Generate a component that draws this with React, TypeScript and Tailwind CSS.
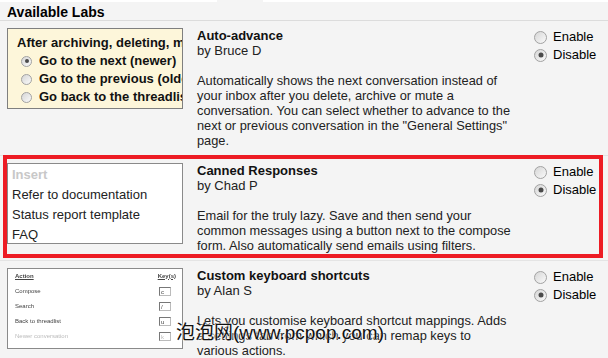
const font = "font-['Liberation_Sans',Arial,sans-serif]";

function Radio({ checked, small }: { checked?: boolean; small?: boolean }) {
  return (
    <span
      className={`relative inline-block shrink-0 rounded-full border border-[#a2a2a2] bg-gradient-to-br from-[#d6d6d6] to-[#fafafa] ${
        small ? "h-[11px] w-[11px]" : "h-[13px] w-[13px]"
      }`}
    >
      {checked && (
        <span
          className={`absolute left-1/2 top-1/2 -translate-x-1/2 -translate-y-1/2 rounded-full bg-[#4a4a4a] ${
            small ? "h-[4px] w-[4px]" : "h-[5px] w-[5px]"
          }`}
        />
      )}
    </span>
  );
}

function AutoAdvanceThumb() {
  const opts = [
    { label: "Go to the next (newer)", checked: true },
    { label: "Go to the previous (older) conversation", checked: false },
    { label: "Go back to the threadlist", checked: false },
  ];
  return (
    <div className="h-[81px] w-[176px] shrink-0 overflow-hidden border border-[#7f7f7f] bg-[#fdf6da] pl-[9px] pt-[5px]">
      <div className="whitespace-nowrap text-[13px] font-bold leading-[18px] text-[#111]">
        After archiving, deleting, muting
      </div>
      {opts.map((o) => (
        <div key={o.label} className="flex h-[18px] items-center gap-[7px] whitespace-nowrap pl-[4px] text-[13px] font-bold text-[#111]">
          <Radio checked={o.checked} small />
          {o.label}
        </div>
      ))}
    </div>
  );
}

function CannedThumb() {
  return (
    <div className="h-[81px] w-[176px] shrink-0 overflow-hidden border border-[#8a8a8a] bg-white pl-[4px] pt-[1px] text-[13px] leading-[20px] text-[#222]">
      <div className="font-bold text-[#c8c8c8]">Insert</div>
      <div>Refer to documentation</div>
      <div>Status report template</div>
      <div>FAQ</div>
    </div>
  );
}

function ShortcutThumb() {
  const rows = [
    { a: "Compose", k: "c", dim: false },
    { a: "Search", k: "/", dim: false },
    { a: "Back to threadlist", k: "u", dim: false },
    { a: "Newer conversation", k: "k", dim: true },
  ];
  return (
    <div className="h-[81px] w-[176px] shrink-0 overflow-hidden border border-[#8a8a8a] bg-white pl-[7px] pr-[6px] pt-[1px] text-[6px] text-[#444] blur-[0.3px]">
      <div className="flex h-[12px] items-center justify-between font-bold underline">
        <span>Action</span>
        <span>Key(s)</span>
      </div>
      <div className="pt-[2px]">
        {rows.map((r) => (
          <div key={r.a} className={`flex h-[15px] items-center justify-between ${r.dim ? "text-[#bbb]" : ""}`}>
            <span>{r.a}</span>
            <span className="mr-[5px] flex h-[9px] w-[12px] items-center border border-[#bbb] border-l-[#777] border-t-[#777] pl-[1px] leading-none">
              {r.k}
            </span>
          </div>
        ))}
      </div>
    </div>
  );
}

const labs = [
  {
    title: "Auto-advance",
    by: "by Bruce D",
    desc: 'Automatically shows the next conversation instead of your inbox after you delete, archive or mute a conversation. You can select whether to advance to the next or previous conversation in the "General Settings" page.',
    thumb: <AutoAdvanceThumb />,
  },
  {
    title: "Canned Responses",
    by: "by Chad P",
    desc: "Email for the truly lazy. Save and then send your common messages using a button next to the compose form. Also automatically send emails using filters.",
    thumb: <CannedThumb />,
  },
  {
    title: "Custom keyboard shortcuts",
    by: "by Alan S",
    desc: "Lets you customise keyboard shortcut mappings. Adds a settings tab from which you can remap keys to various actions.",
    thumb: <ShortcutThumb />,
  },
];

export default function App() {
  return (
    <div className={`relative h-[358px] w-[608px] overflow-hidden bg-[#f4f4f4] ${font}`}>
      <div className="flex h-[2px]">
        <div className="w-[217px] bg-white" />
        <div className="w-[46px]" />
        <div className="flex-1 bg-white" />
      </div>
      <div className="border-b border-[#dcdcdc] pl-[7px] pt-[2px] text-[14px] font-bold leading-[16px] text-black">
        Available Labs
      </div>
      {labs.map((lab) => (
        <div key={lab.title} className="flex border-b border-[#e4e4e4] pb-[7px] pl-[7px] pt-[7px]">
          {lab.thumb}
          <div className="ml-[14px] w-[318px] text-[13px] leading-[15px] text-[#222]">
            <div className="font-bold text-[#111]">{lab.title}</div>
            <div>{lab.by}</div>
            <p className="mt-[15px] text-[12.8px]">{lab.desc}</p>
          </div>
          <div className="ml-[19px] text-[13px] text-black">
            <label className="flex h-[18px] items-center gap-[6px]">
              <Radio />
              Enable
            </label>
            <label className="flex h-[18px] items-center gap-[6px]">
              <Radio checked />
              Disable
            </label>
          </div>
        </div>
      ))}
      <div className="absolute left-[3px] top-[155px] h-[103px] w-[600px] border-4 border-[#ed1c24]" />
      <div className="absolute left-[176px] top-[321px] whitespace-nowrap font-['Liberation_Sans','Noto_Sans_CJK_SC',sans-serif] text-[19px] leading-[24px] text-[#111] [text-shadow:0_0_2px_#fff,0_0_2px_#fff]">
        泡泡网(www.pcpop.com)
      </div>
    </div>
  );
}
